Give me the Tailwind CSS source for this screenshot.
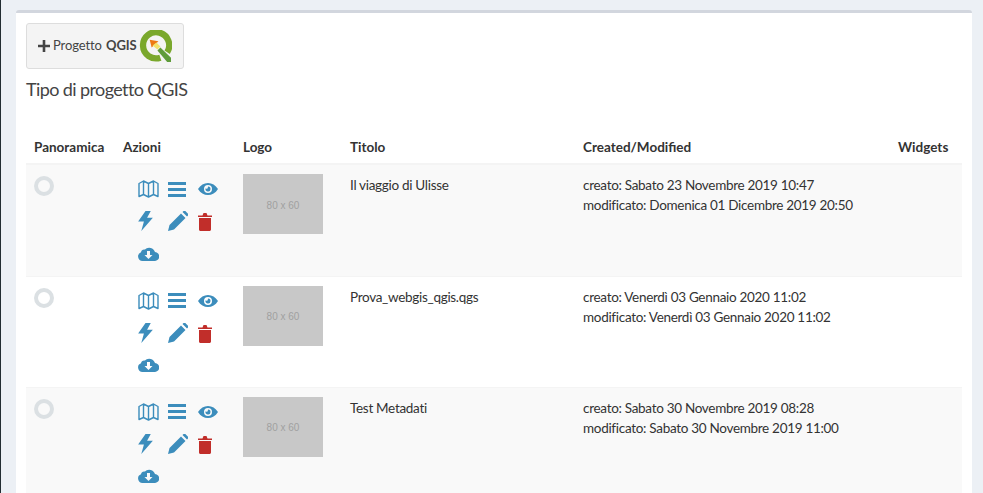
<!DOCTYPE html>
<html lang="en">
  <head>
    <meta charset="UTF-8" />
    <title>Progetti QGIS</title>
    <script src="https://cdn.jsdelivr.net/npm/@tailwindcss/browser@4"></script>
  </head>
  <body class="bg-[#ecf0f5] h-[493px] overflow-hidden font-['Lato','Noto_Sans',sans-serif] text-[#333] text-[13.5px]">
    <div class="border-l border-[#222d32] pl-[15px] pr-[11px] pt-[10px] h-[493px] overflow-hidden">
      <!-- Project box -->
      <div class="bg-white border-t-[3px] border-[#d2d6de] rounded-[3px] px-[10px] pt-[10px] h-[600px]">
        <button class="flex items-center w-[158px] h-[46px] bg-[#f4f4f4] border border-[#ddd] rounded-[3px] pl-[11px] text-[#444] text-[13px] tracking-[-0.1px]">
          <svg class="w-[12px] h-[12px] mr-[3px]" viewBox="0 0 12 12"><path fill="#444" d="M4.700 0h2.600v4.700H12v2.600H7.300V12H4.700V7.300H0V4.700h4.700z" /></svg>
          <span>Progetto <b class="font-bold ml-px">QGIS</b></span>
          <svg class="w-[33px] h-[33px] ml-[2px]" viewBox="0 0 34 34">
            <path fill="none" stroke="#7aa82c" stroke-width="6.500" d="M22 28.500A13.500 13.500 0 1 1 29 23" />
            <path fill="#ee7913" d="M11 10l9 1.500-7 6.500z" />
            <path fill="#f3e26b" d="M18 13l4 4-3 3-5-4z" />
            <path fill="#5f9c3a" d="M19 21l3-3 11 10.500V33h-4z" />
          </svg>
        </button>
        <h3 class="text-[18px] leading-[20px] mt-[10px] text-[#444] font-normal tracking-[-0.6px]">Tipo di progetto QGIS</h3>
        <table class="w-[936px] table-fixed mt-[32px] border-collapse">
          <colgroup>
            <col class="w-[89px]" /><col class="w-[120px]" /><col class="w-[107px]" /><col class="w-[233px]" /><col class="w-[315px]" /><col class="w-[72px]" />
          </colgroup>
          <thead>
            <tr class="h-[33px] border-b-2 border-[#f4f4f4] text-left">
              <th class="px-2 font-bold">Panoramica</th>
              <th class="px-2 font-bold">Azioni</th>
              <th class="px-2 font-bold">Logo</th>
              <th class="px-2 font-bold">Titolo</th>
              <th class="px-2 font-bold">Created/Modified</th>
              <th class="px-2 font-bold">Widgets</th>
            </tr>
          </thead>
          <tbody id="rows"></tbody>
        </table>
      </div>
    </div>

    <template id="row">
      <td class="px-2 pt-[2px] align-top">
        <div class="w-5 h-5 rounded-full border-[4px] border-[#dbe0e3] mt-[9px]"></div>
      </td>
      <td class="pl-[23px] pt-[8px] align-top">
        <div class="grid grid-cols-[repeat(3,30px)] auto-rows-[32px] items-center">
          <!-- map -->
          <svg class="w-[21px] h-[18px]" viewBox="0 0 21 18"><path fill="none" stroke="#3c8dbc" stroke-width="1.400" stroke-linejoin="round" d="M1 3.500l4.500-2.500 5 2.500 5-2.500 4.500 2.500v13l-4.500-2-5 2.500-5-2.500-4.500 2zM5.500 1v14M10.500 3.500v13.500M15.500 1v14" /></svg>
          <!-- bars -->
          <svg class="w-[18px] h-[15px]" viewBox="0 0 18 15"><path fill="#3c8dbc" d="M0 0h18v3H0zM0 6h18v3H0zM0 12h18v3H0z" /></svg>
          <!-- eye -->
          <svg class="w-[20px] h-[12px]" viewBox="0 0 20 12"><path fill="#3c8dbc" fill-rule="evenodd" d="M0 6C2.500 2 6 0 10 0s7.500 2 10 6c-2.500 4-6 6-10 6S2.500 10 0 6zm10-4a4 4 0 1 0 0 8 4 4 0 0 0 0-8z" /><path fill="#3c8dbc" d="M10 3.500a2.500 2.500 0 1 1-2.400 1.800c.4.600 1.500.6 2-.1.400-.5.300-1.200.4-1.700z" /></svg>
          <!-- bolt -->
          <svg class="w-[15px] h-[20px]" viewBox="0 0 14 19"><path fill="#3c8dbc" d="M7 0h5L8.500 6.500H14L3 19l2.500-9H0z" /></svg>
          <!-- pencil -->
          <svg class="w-[20px] h-[20px]" viewBox="0 0 20 20"><path fill="#3c8dbc" d="M0 20l1.500-6L13 2.500l4.500 4.500L6 18.500zM14.500 1l1-1c.6-.4 1.300-.4 1.800 0l2.700 2.700c.4.500.4 1.200 0 1.800l-1 1z" /></svg>
          <!-- trash -->
          <svg class="w-[14px] h-[18px] mt-[2px]" viewBox="0 0 14 18"><path fill="#c12e2a" d="M0 2.500h4.500L5.500 0h3l1 2.500H14V4H0zM1 5h12v11.500c0 .8-.7 1.500-1.500 1.500h-9C1.700 18 1 17.300 1 16.500z" /></svg>
          <!-- cloud download -->
          <svg class="w-[21px] h-[15px]" viewBox="0 0 21 15"><path fill="#3c8dbc" fill-rule="evenodd" d="M4.500 15A4.500 4.500 0 0 1 3 6.300 3.500 3.500 0 0 1 7 3.500 6 6 0 0 1 17 6a4.500 4.500 0 0 1-.5 9zM9 5v4H6.500l4 4 4-4H12V5z" /></svg>
        </div>
      </td>
      <td class="px-2 pt-[9px] align-top">
        <div class="w-20 h-[60px] bg-[#c8c8c8] text-[#a0a0a0] text-[10px] pt-[2px] flex items-center justify-center font-['Liberation_Sans',sans-serif]">80 x 60</div>
      </td>
      <td class="title px-2 pt-[10px] align-top tracking-[-0.3px]"></td>
      <td class="dates px-2 pt-[10px] align-top leading-[20px] tracking-[-0.3px]"></td>
      <td></td>
    </template>

    <script>
      const projects = [
        { title: "Il viaggio di Ulisse", created: "Sabato 23 Novembre 2019 10:47", modified: "Domenica 01 Dicembre 2019 20:50", h: 112, bg: "#f9f9f9" },
        { title: "Prova_webgis_qgis.qgs", created: "Venerdì 03 Gennaio 2020 11:02", modified: "Venerdì 03 Gennaio 2020 11:02", h: 111, bg: "#fff" },
        { title: "Test Metadati", created: "Sabato 30 Novembre 2019 08:28", modified: "Sabato 30 Novembre 2019 11:00", h: 111, bg: "#f9f9f9" },
      ];
      const rows = document.getElementById("rows");
      const tpl = document.getElementById("row");
      projects.forEach((p) => {
        const tr = document.createElement("tr");
        tr.appendChild(tpl.content.cloneNode(true));
        tr.style.height = p.h + "px";
        tr.style.background = p.bg;
        tr.style.borderBottom = "1px solid #f4f4f4";
        tr.querySelector(".title").textContent = p.title;
        tr.querySelector(".dates").innerHTML = `creato: ${p.created}<br>modificato: ${p.modified}`;
        rows.appendChild(tr);
      });
    </script>
  </body>
</html>
